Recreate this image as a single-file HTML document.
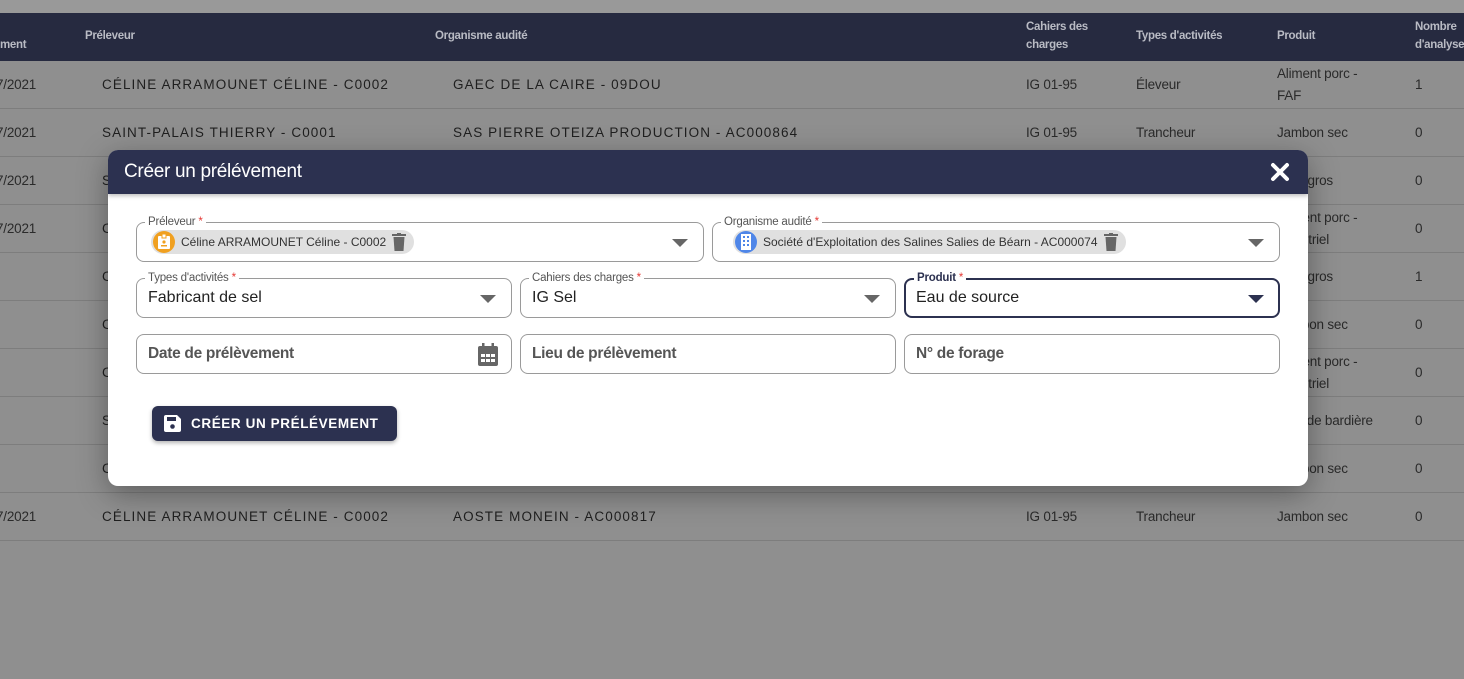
<!DOCTYPE html>
<html><head><meta charset="utf-8">
<style>
*{box-sizing:border-box;margin:0;padding:0}
body{width:1464px;height:679px;overflow:hidden;background:#8f8f8f;font-family:"Liberation Sans",sans-serif;position:relative}
.top{position:absolute;left:0;top:0;width:1464px;height:13px;background:#999}
.thead{position:absolute;left:0;top:13px;width:1464px;height:48px;background:#262a40;color:#b9bbc4;font-weight:bold;font-size:11.5px;letter-spacing:-0.3px}
.thead span{position:absolute;line-height:18px}
.row{position:absolute;left:0;width:1464px;height:48px;border-bottom:1px solid #7d7d7d;color:#1f1f1f;font-size:13px}
.row span{position:absolute;top:0;height:48px;display:flex;align-items:center;line-height:22px}
.u{letter-spacing:1.1px;font-size:13.5px}
.n{font-size:13.5px;color:#2a2a2a;letter-spacing:-0.2px}
.modal{position:absolute;left:108px;top:150px;width:1200px;height:336px;background:#fff;border-radius:10px;box-shadow:0 8px 30px rgba(0,0,0,.35);overflow:hidden}
.mh{height:44px;background:#2c3150;color:#fff;font-size:19px;padding-left:16px;line-height:44px;box-shadow:0 2px 4px rgba(0,0,0,.25);position:relative;letter-spacing:-0.3px}
.x{position:absolute;right:18px;top:12px}
.f{position:absolute;border:1px solid #9a9a9a;border-radius:8px;height:40px}
.f.act{border:2px solid #2c3150}
.lab{position:absolute;top:-8px;left:8px;background:#fff;padding:0 3px;font-size:11.5px;color:#555;line-height:14px;letter-spacing:-0.2px}
.lab b{color:#e53935;font-weight:normal}
.val{position:absolute;left:11px;top:10px;font-size:16px;color:#222}
.ph{position:absolute;left:11px;top:10px;font-size:15.5px;color:#555;font-weight:bold;letter-spacing:-0.3px}
.arr{position:absolute;right:15px;top:16px;width:0;height:0;border-left:8px solid transparent;border-right:8px solid transparent;border-top:8px solid #666}
.chip{position:absolute;left:14px;top:7px;height:24px;background:#e0e0e0;border-radius:12px;display:flex;align-items:center;padding:0 8px 0 2px;font-size:12px;color:#333}
.av{width:22px;height:22px;border-radius:11px;margin-right:6px;display:flex;align-items:center;justify-content:center}
.btn{position:absolute;left:44px;top:256px;width:245px;height:35px;background:#2c3150;border-radius:6px;color:#fff;font-weight:bold;font-size:13.5px;letter-spacing:0.6px;display:flex;align-items:center;padding-left:12px;box-shadow:0 2px 4px rgba(0,0,0,.3)}
</style></head><body>
<div class="top"></div>
<div class="thead">
<span style="left:0;top:23px">ment</span>
<span style="left:85px;top:14px">Préleveur</span>
<span style="left:435px;top:14px">Organisme audité</span>
<span style="left:1026px;top:5px">Cahiers des<br>charges</span>
<span style="left:1136px;top:14px">Types d'activités</span>
<span style="left:1277px;top:14px">Produit</span>
<span style="left:1415px;top:5px">Nombre<br>d'analyses</span>
</div>

<div class="row" style="top:61px"><span class="n" style="left:-4px">7/2021</span><span class="u" style="left:102px">CÉLINE ARRAMOUNET CÉLINE - C0002</span><span class="u" style="left:453px">GAEC DE LA CAIRE - 09DOU</span><span class="n" style="left:1026px">IG 01-95</span><span class="n" style="left:1136px">Éleveur</span><span class="n" style="left:1277px">Aliment porc -<br>FAF</span><span class="n" style="left:1415px">1</span></div>
<div class="row" style="top:109px"><span class="n" style="left:-4px">7/2021</span><span class="u" style="left:102px">SAINT-PALAIS THIERRY - C0001</span><span class="u" style="left:453px">SAS PIERRE OTEIZA PRODUCTION - AC000864</span><span class="n" style="left:1026px">IG 01-95</span><span class="n" style="left:1136px">Trancheur</span><span class="n" style="left:1277px">Jambon sec</span><span class="n" style="left:1415px">0</span></div>
<div class="row" style="top:157px"><span class="n" style="left:-4px">7/2021</span><span class="u" style="left:102px">S</span><span class="n" style="left:1277px">Porc gros</span><span class="n" style="left:1415px">0</span></div>
<div class="row" style="top:205px"><span class="n" style="left:-4px">7/2021</span><span class="u" style="left:102px">C</span><span class="n" style="left:1277px">Aliment porc -<br>industriel</span><span class="n" style="left:1415px">0</span></div>
<div class="row" style="top:253px"><span class="u" style="left:102px">C</span><span class="n" style="left:1277px">Porc gros</span><span class="n" style="left:1415px">1</span></div>
<div class="row" style="top:301px"><span class="u" style="left:102px">C</span><span class="n" style="left:1277px">Jambon sec</span><span class="n" style="left:1415px">0</span></div>
<div class="row" style="top:349px"><span class="u" style="left:102px">C</span><span class="n" style="left:1277px">Aliment porc -<br>industriel</span><span class="n" style="left:1415px">0</span></div>
<div class="row" style="top:397px"><span class="u" style="left:102px">S</span><span class="n" style="left:1277px">Lard de bardière</span><span class="n" style="left:1415px">0</span></div>
<div class="row" style="top:445px"><span class="u" style="left:102px">C</span><span class="n" style="left:1277px">Jambon sec</span><span class="n" style="left:1415px">0</span></div>
<div class="row" style="top:493px"><span class="n" style="left:-4px">7/2021</span><span class="u" style="left:102px">CÉLINE ARRAMOUNET CÉLINE - C0002</span><span class="u" style="left:453px">AOSTE MONEIN - AC000817</span><span class="n" style="left:1026px">IG 01-95</span><span class="n" style="left:1136px">Trancheur</span><span class="n" style="left:1277px">Jambon sec</span><span class="n" style="left:1415px">0</span></div>

<div class="modal">
<div class="mh">Créer un prélévement
<svg class="x" width="20" height="20" viewBox="0 0 20 20"><path d="M3 3L17 17M17 3L3 17" stroke="#fff" stroke-width="4" stroke-linecap="round"/></svg></div>

<div class="f" style="left:28px;top:72px;width:568px"><div class="lab">Préleveur <b>*</b></div>
<div class="chip"><div class="av" style="background:#f0a020"><svg width="14" height="16" viewBox="0 0 14 16"><rect x="1" y="2" width="12" height="13" rx="1" fill="#fff"/><rect x="5" y="0" width="4" height="4" fill="#fff" stroke="#f0a020" stroke-width="1"/><circle cx="7" cy="8" r="1.6" fill="#f0a020"/><rect x="4" y="11" width="6" height="1.5" fill="#f0a020"/></svg></div>Céline ARRAMOUNET Céline - C0002
<svg style="margin-left:6px" width="14" height="18" viewBox="0 0 14 18"><rect x="0" y="1" width="14" height="2" fill="#666"/><rect x="5" y="0" width="4" height="2" fill="#666"/><path d="M1.5 4H12.5L11.5 18H2.5Z" fill="#666"/></svg></div>
<div class="arr"></div></div>

<div class="f" style="left:604px;top:72px;width:568px"><div class="lab">Organisme audité <b>*</b></div>
<div class="chip" style="left:20px"><div class="av" style="background:#4f86e8"><svg width="10" height="16" viewBox="0 0 10 16"><rect x="0" y="0" width="10" height="16" fill="#fff"/><g fill="#4f86e8"><rect x="2" y="2" width="2" height="2"/><rect x="6" y="2" width="2" height="2"/><rect x="2" y="6" width="2" height="2"/><rect x="6" y="6" width="2" height="2"/><rect x="2" y="10" width="2" height="2"/><rect x="6" y="10" width="2" height="2"/></g></svg></div>Société d'Exploitation des Salines Salies de Béarn - AC000074
<svg style="margin-left:6px" width="14" height="18" viewBox="0 0 14 18"><rect x="0" y="1" width="14" height="2" fill="#666"/><rect x="5" y="0" width="4" height="2" fill="#666"/><path d="M1.5 4H12.5L11.5 18H2.5Z" fill="#666"/></svg></div>
<div class="arr"></div></div>

<div class="f" style="left:28px;top:128px;width:376px"><div class="lab">Types d'activités <b>*</b></div><div class="val">Fabricant de sel</div><div class="arr"></div></div>
<div class="f" style="left:412px;top:128px;width:376px"><div class="lab">Cahiers des charges <b>*</b></div><div class="val">IG Sel</div><div class="arr"></div></div>
<div class="f act" style="left:796px;top:128px;width:376px"><div class="lab" style="color:#2c3150;font-weight:bold;top:-9px">Produit <b>*</b></div><div class="val" style="left:10px;top:9px">Eau de source</div><div class="arr" style="border-top-color:#2c3150;right:14px;top:15px"></div></div>

<div class="f" style="left:28px;top:184px;width:376px"><div class="ph">Date de prélèvement</div>
<svg style="position:absolute;right:12px;top:8px" width="22" height="24" viewBox="0 0 22 24"><rect x="5" y="0" width="2.5" height="4" fill="#666"/><rect x="14.5" y="0" width="2.5" height="4" fill="#666"/><rect x="1" y="3" width="20" height="20" rx="2" fill="#666"/><g fill="#fff"><rect x="4" y="11" width="4" height="3"/><rect x="9" y="11" width="4" height="3"/><rect x="14" y="11" width="4" height="3"/><rect x="4" y="16" width="4" height="3"/><rect x="9" y="16" width="4" height="3"/><rect x="14" y="16" width="4" height="3"/></g></svg></div>
<div class="f" style="left:412px;top:184px;width:376px"><div class="ph">Lieu de prélèvement</div></div>
<div class="f" style="left:796px;top:184px;width:376px"><div class="ph">N° de forage</div></div>

<div class="btn"><svg width="17" height="17" viewBox="0 0 17 17" style="margin-right:10px"><path d="M0 2Q0 0 2 0H13L17 4V15Q17 17 15 17H2Q0 17 0 15Z" fill="#fff"/><rect x="3" y="2" width="9" height="4" fill="#2c3150"/><circle cx="8.5" cy="11.5" r="2.3" fill="#2c3150"/></svg>CRÉER UN PRÉLÉVEMENT</div>
</div>
</body></html>
